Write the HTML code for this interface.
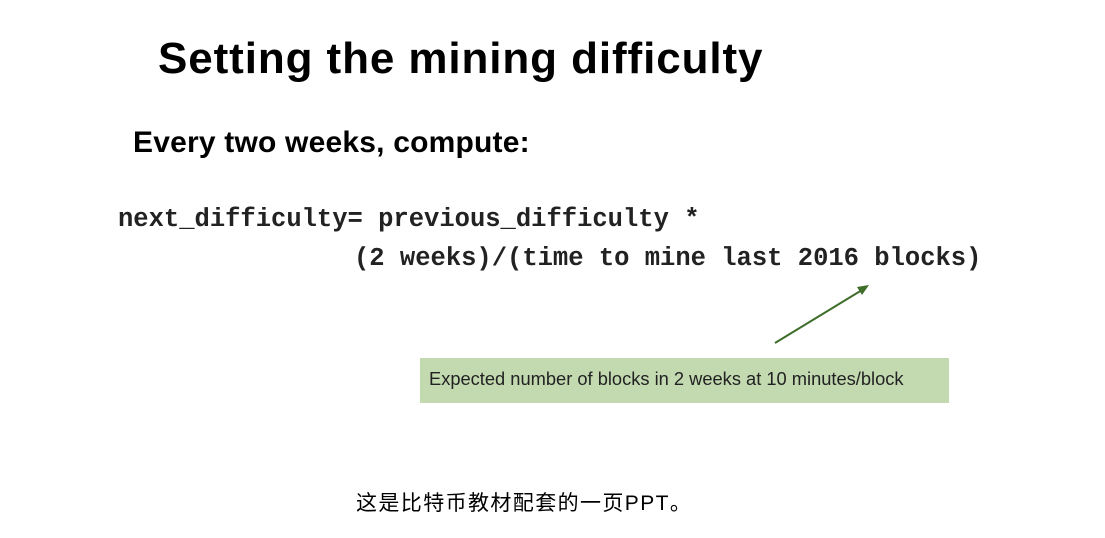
<!DOCTYPE html>
<html><head><meta charset="utf-8"><style>
body{margin:0;width:1105px;height:538px;background:#fff;position:relative;overflow:hidden;font-family:"Liberation Sans",sans-serif;color:#000}
.a{position:absolute;white-space:nowrap}
#t{left:158px;top:34px;font-size:44px;font-weight:bold;letter-spacing:0.9px}
#s{left:133px;top:126px;font-size:30px;font-weight:bold;letter-spacing:0.2px}
.m{font-family:"Liberation Mono",monospace;font-size:25.5px;font-weight:bold;color:#222}
#box{left:420px;top:358px;width:529px;height:45px;background:#c3dab1}
#bt{left:429px;top:368px;font-family:"Liberation Sans Narrow","Liberation Sans",sans-serif;font-size:18.3px;color:#222}
#c{left:356px;top:487px;font-size:21px;letter-spacing:1.4px;font-family:"Liberation Sans","Noto Sans CJK SC",sans-serif}
</style></head><body>
<div class="a" id="t">Setting the mining difficulty</div>
<div class="a" id="s">Every two weeks, compute:</div>
<div class="a m" style="left:118px;top:205px">next_difficulty= previous_difficulty *</div>
<div class="a m" style="left:354px;top:244px">(2 weeks)/(time to mine last 2016 blocks)</div>
<svg class="a" style="left:0;top:0" width="1105" height="538"><line x1="775" y1="343" x2="862" y2="290" stroke="#3f6e2b" stroke-width="2"/><polygon points="869,285 857,287 862,295" fill="#3f6e2b"/></svg>
<div class="a" id="box"></div>
<div class="a" id="bt">Expected number of blocks in 2 weeks at 10 minutes/block</div>
<div class="a" id="c">这是比特币教材配套的一页PPT。</div>
</body></html>
